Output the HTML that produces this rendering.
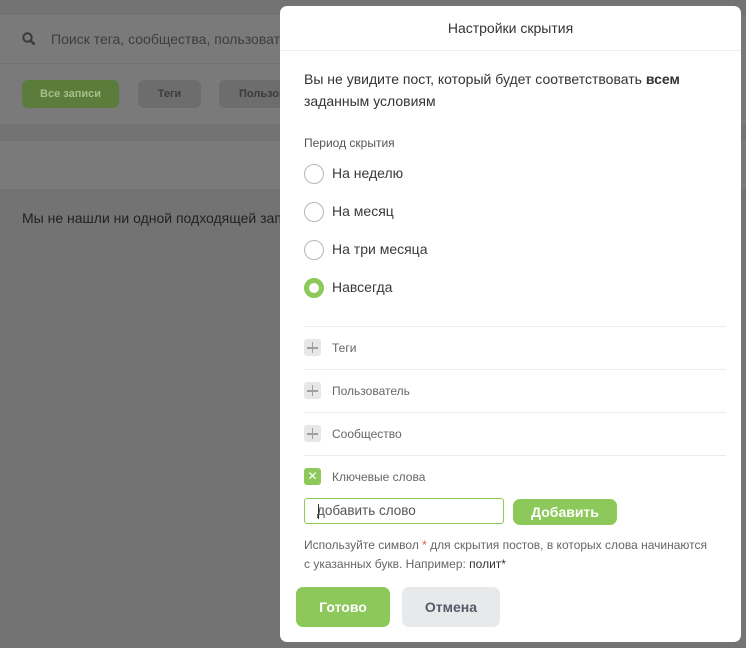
<!DOCTYPE html>
<html><head><meta charset="utf-8"><style>
*{box-sizing:border-box;margin:0;padding:0}
body{width:746px;height:648px;overflow:hidden;background:#737373;font-family:"Liberation Sans",Arial,sans-serif;position:relative}
.card{position:absolute;left:0;width:746px;background:#7a7a7a}
.abs{position:absolute}
.modal{position:absolute;left:280px;top:6px;width:461px;height:636px;background:#fff;border-radius:7px}
.radio{position:absolute;left:24px;width:20px;height:20px;border:1px solid #b8b8b8;border-radius:50%}
.rl{position:absolute;left:52px;font-size:14px;color:#3a3a3a}
.sep{position:absolute;left:24px;width:422px;height:1px;background:#ececec}
.pl{position:absolute;left:24px;width:17px;height:17px;background:#e7e7e7;border-radius:3px}
.pl:before{content:"";position:absolute;left:3px;top:8px;width:11px;height:1.6px;background:#a0a0a0}
.pl:after{content:"";position:absolute;left:7.7px;top:3px;width:1.6px;height:11px;background:#a0a0a0}
.sl{position:absolute;left:52px;font-size:12px;color:#666}
</style></head><body>
<div class="card" style="top:15px;height:48px"></div>
<div class="card" style="top:64px;height:60px"></div>
<div class="card" style="top:141px;height:48px"></div>
<svg class="abs" style="left:22px;top:32px" width="14" height="14" viewBox="0 0 14 14"><circle cx="5.5" cy="5.5" r="4.2" stroke="#3a3a3a" stroke-width="2" fill="none"/><line x1="8.7" y1="8.7" x2="12.5" y2="12.5" stroke="#3a3a3a" stroke-width="2.4"/></svg>
<div class="abs" style="left:51px;top:31px;font-size:14px;color:#3d3d3d">Поиск тега, сообщества, пользовател</div>
<div class="abs" style="left:22px;top:80px;width:97px;height:28px;background:#5c7c3c;border-radius:6px;color:#a8bf8c;font-size:11px;font-weight:bold;text-align:center;line-height:28px">Все записи</div>
<div class="abs" style="left:138px;top:80px;width:63px;height:28px;background:#6d6d6d;border-radius:6px;color:#3c3c3c;font-size:11px;font-weight:bold;text-align:center;line-height:28px">Теги</div>
<div class="abs" style="left:219px;top:80px;width:70px;height:28px;background:#6d6d6d;border-radius:6px;color:#3c3c3c;font-size:11px;font-weight:bold;line-height:28px;padding-left:20px">Пользов</div>
<div class="abs" style="left:22px;top:210px;font-size:14px;color:#222">Мы не нашли ни одной подходящей зап</div>

<div class="modal">
<div class="abs" style="left:0;top:0;width:461px;height:45px;border-bottom:1px solid #eee;text-align:center;line-height:44px;font-size:14px;color:#333">Настройки скрытия</div>
<div class="abs" style="left:24px;top:62px;width:410px;font-size:14px;line-height:22px;color:#333">Вы не увидите пост, который будет соответствовать <b>всем</b> заданным условиям</div>
<div class="abs" style="left:24px;top:130px;font-size:12px;color:#555">Период скрытия</div>
<div class="radio" style="top:158px"></div><div class="rl" style="top:159px">На неделю</div>
<div class="radio" style="top:196px"></div><div class="rl" style="top:197px">На месяц</div>
<div class="radio" style="top:234px"></div><div class="rl" style="top:235px">На три месяца</div>
<div class="radio" style="top:272px;border:5px solid #8dc95a"></div><div class="rl" style="top:273px">Навсегда</div>
<div class="sep" style="top:320px"></div>
<div class="pl" style="top:333px"></div><div class="sl" style="top:335px">Теги</div>
<div class="sep" style="top:363px"></div>
<div class="pl" style="top:376px"></div><div class="sl" style="top:378px">Пользователь</div>
<div class="sep" style="top:406px"></div>
<div class="pl" style="top:419px"></div><div class="sl" style="top:421px">Сообщество</div>
<div class="sep" style="top:449px"></div>
<div class="abs" style="left:24px;top:462px;width:17px;height:17px;background:#8dc95a;border-radius:3px;color:#fff;font-size:12px;line-height:17px;text-align:center">✕</div><div class="sl" style="top:464px">Ключевые слова</div>
<div class="abs" style="left:24px;top:492px;width:200px;height:26px;border:1px solid #8dc95a;border-radius:3px;font-size:13.5px;color:#555;line-height:24px;padding-left:12px">добавить слово<span class="abs" style="left:13px;top:5px;width:1px;height:15px;background:#333"></span></div>
<div class="abs" style="left:233px;top:493px;width:104px;height:26px;background:#8dc95a;border-radius:7px;color:#fff;font-weight:bold;font-size:14px;text-align:center;line-height:26px">Добавить</div>
<div class="abs" style="left:24px;top:530px;width:430px;font-size:12px;line-height:19px;color:#666">Используйте символ <span style="color:#e05a4e">*</span> для скрытия постов, в которых слова начинаются<br>с указанных букв. Например: <span style="color:#333">полит*</span></div>
<div class="abs" style="left:16px;top:581px;width:94px;height:40px;background:#8dc95a;border-radius:7px;color:#fff;font-weight:bold;font-size:14px;text-align:center;line-height:40px">Готово</div>
<div class="abs" style="left:122px;top:581px;width:98px;height:40px;background:#e8e9eb;border-radius:7px;color:#555b66;font-weight:bold;font-size:14px;text-align:center;line-height:40px">Отмена</div>
</div>
</body></html>
